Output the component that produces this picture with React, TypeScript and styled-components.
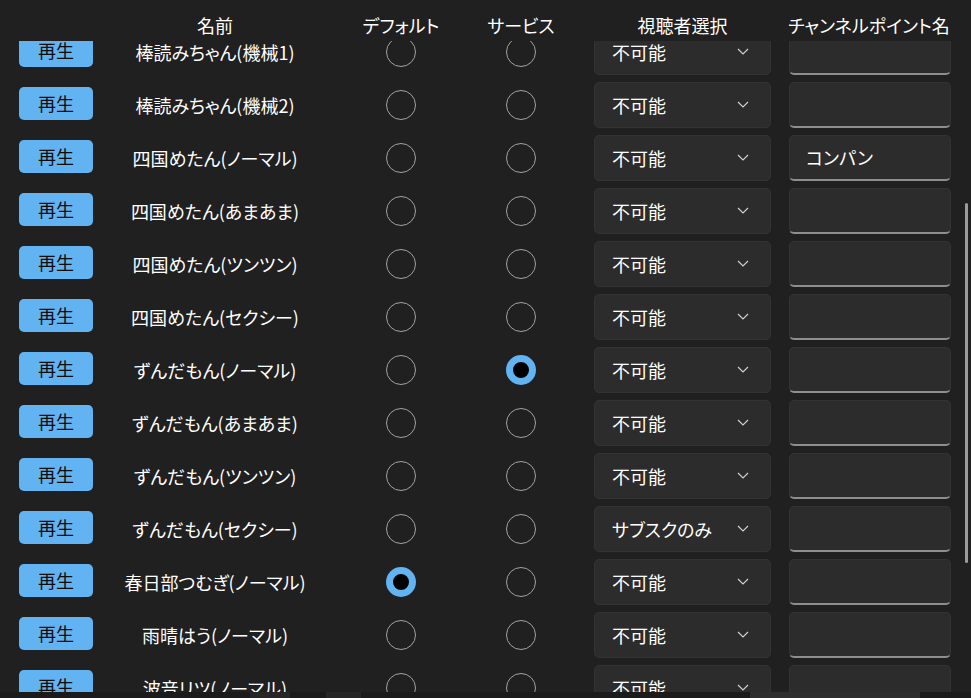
import { FC, useLayoutEffect, useRef } from "react";
import styled, { createGlobalStyle, css } from "styled-components";

const colors = {
    page: "#202020",
    text: "#ffffff",
    blue: "#62b3f1",
    field: "#2c2c2c",
    fieldBorder: "#333333",
    radio: "#a2a2a2",
    underline: "#8e8e8e",
};

const GlobalStyle = createGlobalStyle`
    html, body {
        margin: 0;
        padding: 0;
        background: ${colors.page};
    }
    body {
        font-family: "Noto Sans CJK JP", "Noto Sans", sans-serif;
        font-feature-settings: "palt";
        color: ${colors.text};
    }
`;

const COLUMNS = "74px 244px 128px 112px 194px 180px";

const Page = styled.div`
    position: relative;
    width: 971px;
    height: 698px;
    overflow: hidden;
    background: ${colors.page};
    display: flex;
    flex-direction: column;
`;

const Scroller = styled.div`
    flex: 1;
    overflow-y: scroll;
    scrollbar-width: none;
    &::-webkit-scrollbar {
        display: none;
    }
`;

const HeaderRow = styled.div`
    position: sticky;
    top: 0;
    z-index: 2;
    height: 41px;
    display: grid;
    grid-template-columns: ${COLUMNS};
    padding-left: 19px;
    background: ${colors.page};
    align-items: center;
`;

const HeaderCell = styled.div<{ $inset?: number }>`
    padding-left: ${({ $inset }) => $inset ?? 0}px;
    padding-top: 8px;
    text-align: center;
    font-size: 18px;
    line-height: 24px;
    white-space: nowrap;
`;

const List = styled.div`
    display: flex;
    flex-direction: column;
    padding-bottom: 40px;
`;

const Row = styled.div`
    height: 53px;
    display: grid;
    grid-template-columns: ${COLUMNS};
    padding-left: 19px;
    align-items: center;
`;

const PlayButton = styled.button`
    width: 74px;
    height: 33px;
    border: none;
    border-radius: 5px;
    background: ${colors.blue};
    color: #0c0c0c;
    font-family: inherit;
    font-feature-settings: "palt";
    font-size: 18px;
    line-height: 33px;
    padding: 0;
    margin-top: -2px;
`;

const Name = styled.div`
    text-align: center;
    font-size: 18px;
    white-space: nowrap;
`;

const RadioCell = styled.div`
    display: flex;
    justify-content: center;
`;

const Radio = styled.span<{ $checked: boolean }>`
    box-sizing: border-box;
    width: 30px;
    height: 30px;
    border-radius: 50%;
    ${({ $checked }) =>
        $checked
            ? css`
                  border: 7px solid ${colors.blue};
                  background: #000000;
              `
            : css`
                  border: 1.6px solid ${colors.radio};
                  background: transparent;
              `}
`;

const Select = styled.div`
    justify-self: end;
    box-sizing: border-box;
    width: 177px;
    height: 46px;
    border: 1px solid ${colors.fieldBorder};
    border-radius: 5px;
    background: ${colors.field};
    display: flex;
    align-items: center;
    justify-content: space-between;
    padding: 0 21px 0 17px;
    font-size: 18px;
`;

const Chevron = styled.svg`
    width: 12px;
    height: 7px;
`;

const TextInput = styled.div`
    justify-self: end;
    box-sizing: border-box;
    width: 162px;
    height: 46px;
    border: 1px solid ${colors.fieldBorder};
    border-bottom: 2px solid ${colors.underline};
    border-radius: 5px;
    background: ${colors.field};
    display: flex;
    align-items: center;
    padding-left: 16px;
    font-size: 18px;
`;

const ScrollThumb = styled.div`
    position: absolute;
    right: 3px;
    top: 203px;
    width: 3px;
    height: 360px;
    border-radius: 2px;
    background: #9b9b9b;
`;

const Footer = styled.div`
    height: 6px;
    display: flex;
    background: #1b1b1b;
`;

const FooterBlock = styled.div<{ $w: number; $c: string }>`
    width: ${({ $w }) => $w}px;
    background: ${({ $c }) => $c};
`;

interface Voice {
    name: string;
    isDefault?: boolean;
    isService?: boolean;
    viewer?: string;
    point?: string;
}

const voices: Voice[] = [
    { name: "棒読みちゃん(機械1)" },
    { name: "棒読みちゃん(機械2)" },
    { name: "四国めたん(ノーマル)", point: "コンパン" },
    { name: "四国めたん(あまあま)" },
    { name: "四国めたん(ツンツン)" },
    { name: "四国めたん(セクシー)" },
    { name: "ずんだもん(ノーマル)", isService: true },
    { name: "ずんだもん(あまあま)" },
    { name: "ずんだもん(ツンツン)" },
    { name: "ずんだもん(セクシー)", viewer: "サブスクのみ" },
    { name: "春日部つむぎ(ノーマル)", isDefault: true },
    { name: "雨晴はう(ノーマル)" },
    { name: "波音リツ(ノーマル)" },
    { name: "波音リツ(クイーン)" },
];

const VoiceRow: FC<{ voice: Voice }> = ({ voice }) => (
    <Row>
        <PlayButton>再生</PlayButton>
        <Name>{voice.name}</Name>
        <RadioCell>
            <Radio $checked={!!voice.isDefault} />
        </RadioCell>
        <RadioCell>
            <Radio $checked={!!voice.isService} />
        </RadioCell>
        <Select>
            <span>{voice.viewer ?? "不可能"}</span>
            <Chevron viewBox="0 0 12 7">
                <polyline points="1,1 6,6 11,1" fill="none" stroke="#d0d0d0" strokeWidth="1.2" />
            </Chevron>
        </Select>
        <TextInput>{voice.point}</TextInput>
    </Row>
);

export default function App() {
    const scrollerRef = useRef<HTMLDivElement>(null);

    useLayoutEffect(() => {
        if (scrollerRef.current) scrollerRef.current.scrollTop = 16;
    }, []);

    return (
        <>
            <GlobalStyle />
            <Page>
                <Scroller ref={scrollerRef}>
                    <HeaderRow>
                        <div />
                        <HeaderCell>名前</HeaderCell>
                        <HeaderCell>デフォルト</HeaderCell>
                        <HeaderCell>サービス</HeaderCell>
                        <HeaderCell $inset={17}>視聴者選択</HeaderCell>
                        <HeaderCell $inset={16}>チャンネルポイント名</HeaderCell>
                    </HeaderRow>
                    <List>
                        {voices.map((v) => (
                            <VoiceRow key={v.name} voice={v} />
                        ))}
                    </List>
                </Scroller>
                <Footer>
                    <FooterBlock $w={250} $c="#1b1b1b" />
                    <FooterBlock $w={40} $c="#262626" />
                    <FooterBlock $w={36} $c="#1b1b1b" />
                    <FooterBlock $w={35} $c="#262626" />
                    <FooterBlock $w={389} $c="#1b1b1b" />
                    <FooterBlock $w={170} $c="#2e2e2e" />
                </Footer>
                <ScrollThumb />
            </Page>
        </>
    );
}
